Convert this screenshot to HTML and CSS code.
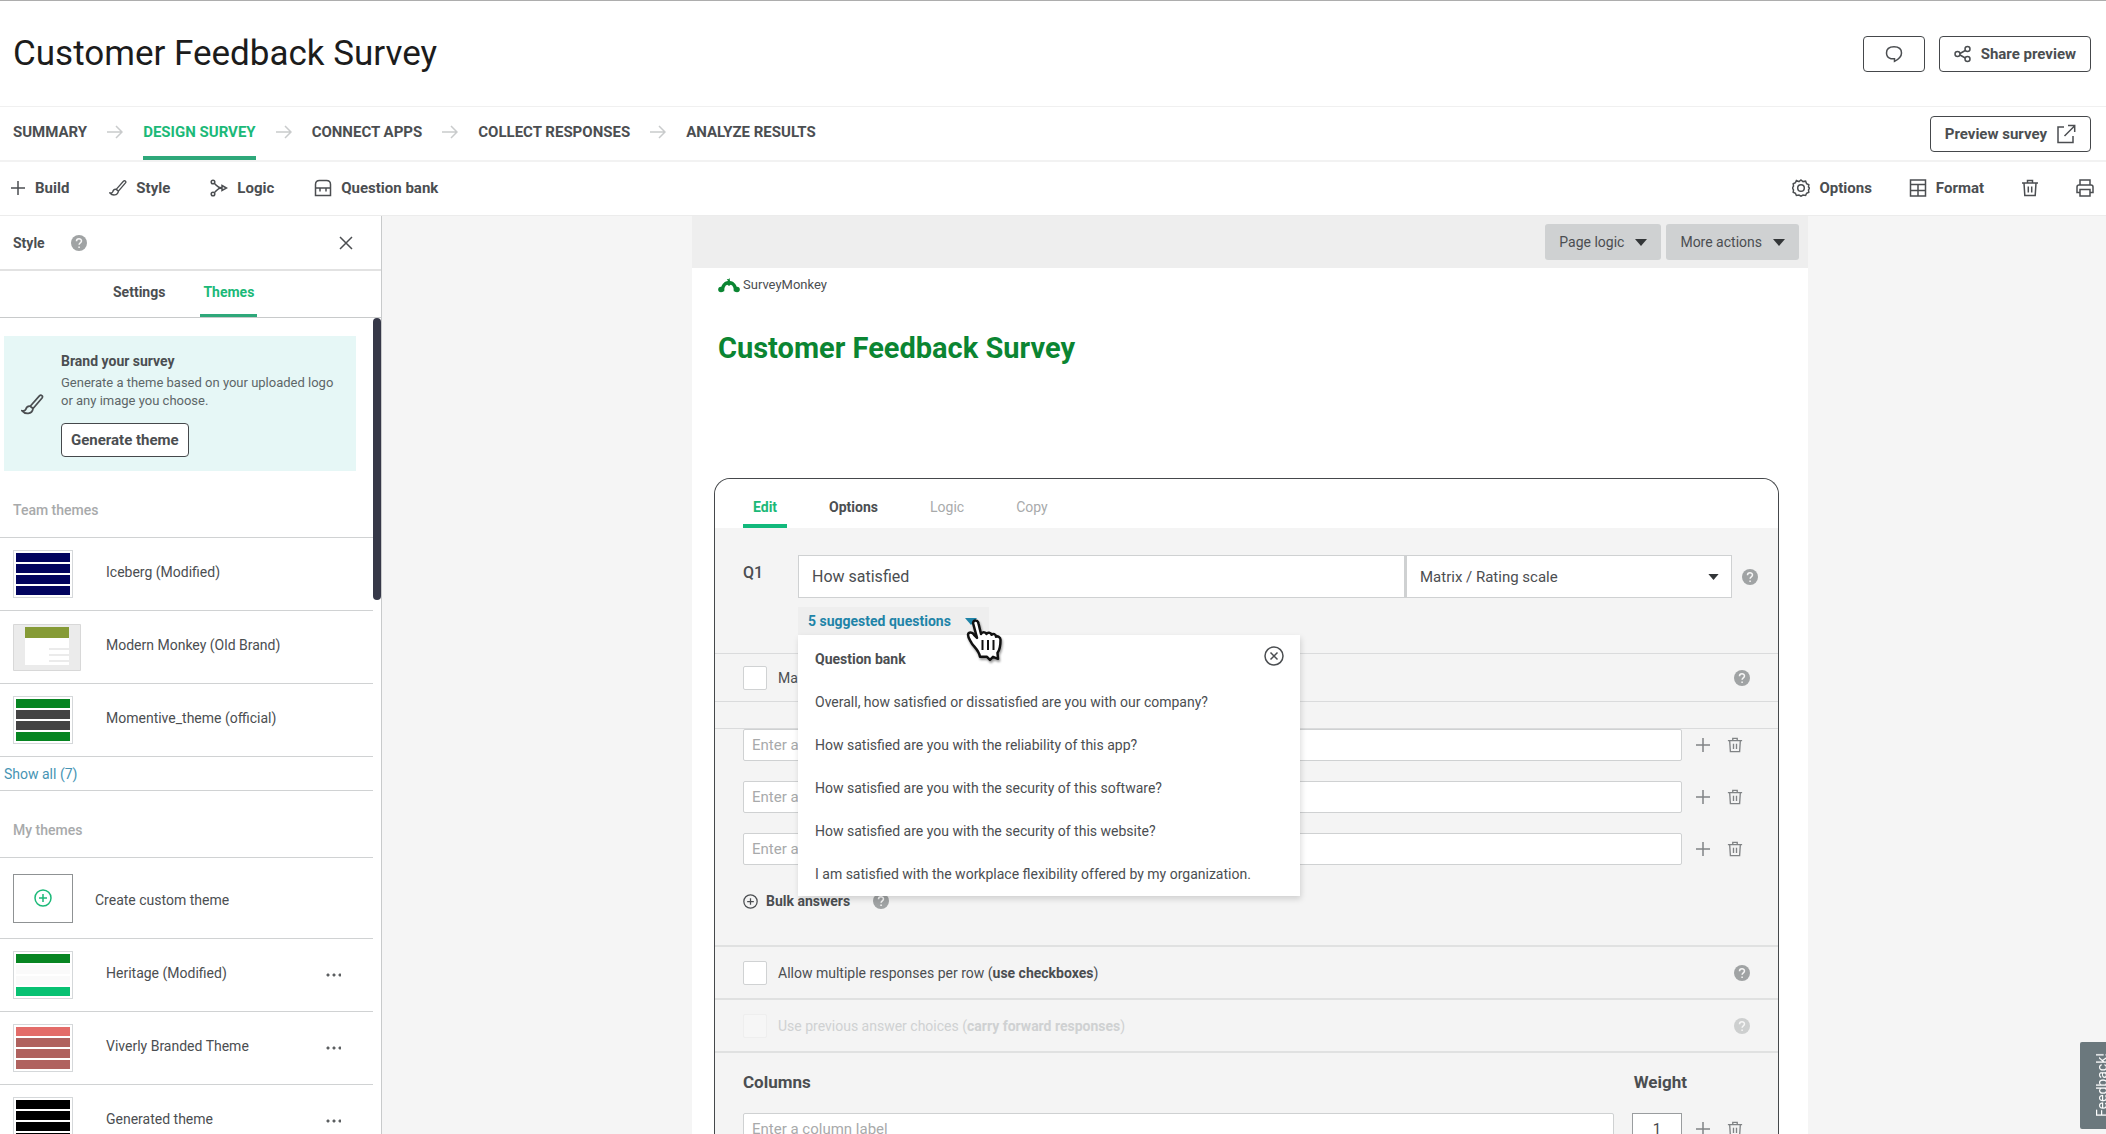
FILE: index.html
```html
<!DOCTYPE html>
<html lang="en">
	<head>
		<meta charset="utf-8">
		<title>Customer Feedback Survey</title>
		<link rel="stylesheet" href="styles.css">
	</head>
	<body>
		<!-- shared icons -->
		<svg class="sprite" width="0" height="0" aria-hidden="true">
			<symbol id="plus" viewBox="0 0 16 16"><path d="M8 1v14M1 8h14"/></symbol>
			<symbol id="arrow" viewBox="0 0 16 16"><path d="M0 8h15M9 2l6 6-6 6"/></symbol>
			<symbol id="brush" viewBox="0 0 20 20"><path d="M8 11.500L16 2.500c1.500-1.500 3.500.2 2.300 1.800L10.500 13.500M8 11.500c-2.500-.5-3.500 1.500-4 3-.4 1-1.500 1.200-3 1 2.500 3 8.500 3.500 9.500-2zM8 11.500l2.500 2"/></symbol>
			<symbol id="trash" viewBox="0 0 18 18"><path d="M1 4h16M6.500 4V1.500h5V4M3 4l.8 12.500h10.400L15 4M7.300 7.500v6M10.700 7.500v6"/></symbol>
			<symbol id="help" viewBox="0 0 16 16"><circle cx="8" cy="8" r="8" stroke="none"/><path fill="none" stroke="#f5f5f5" stroke-width="1.500" d="M5.500 6.300c0-3.300 5-3.200 5-.2 0 1.900-2.400 1.800-2.400 3.700M8.100 11.400v1.700"/></symbol>
			<symbol id="caret" viewBox="0 0 12 7"><path d="M0 0h12L6 7z"/></symbol>
			<symbol id="circle-plus" viewBox="0 0 18 18"><circle cx="9" cy="9" r="8"/><path d="M9 5v8M5 9h8"/></symbol>
		</svg>

		<header class="page-header">
			<h1>Customer Feedback Survey</h1>
			<div class="header-actions">
				<button class="btn btn-comment" type="button" aria-label="Comments">
					<svg class="icon" width="18" height="18" viewBox="0 0 18 18"><path d="M6 13.700C2.800 13 1.500 10.500 1.500 8 1.500 4 4.500 1.700 9 1.700S16.500 4 16.500 8c0 3.700-3 6.300-7 8.300v-2.500z"/></svg>
				</button>
				<button class="btn" type="button">
					<svg class="icon" width="18" height="18" viewBox="0 0 18 18"><circle cx="3.500" cy="9" r="2.500"/><circle cx="13.500" cy="4" r="2.500"/><circle cx="13.500" cy="14" r="2.500"/><path d="M6 8.500l5.300-3M6 10l5.300 3"/></svg>
					Share preview
				</button>
			</div>
		</header>

		<div class="steps-bar">
			<nav class="steps">
				<a href="#">SUMMARY</a>
				<svg class="icon step-arrow" width="16" height="16"><use href="#arrow"/></svg>
				<a href="#" class="active">DESIGN SURVEY</a>
				<svg class="icon step-arrow" width="16" height="16"><use href="#arrow"/></svg>
				<a href="#">CONNECT APPS</a>
				<svg class="icon step-arrow" width="16" height="16"><use href="#arrow"/></svg>
				<a href="#">COLLECT RESPONSES</a>
				<svg class="icon step-arrow" width="16" height="16"><use href="#arrow"/></svg>
				<a href="#">ANALYZE RESULTS</a>
			</nav>
			<button class="btn" type="button">
				Preview survey
				<svg class="icon" width="20" height="20" viewBox="0 0 20 20"><path d="M8 3H2v15.500h15V12M8.500 12L18.500 2M12 1.500h6.700V8"/></svg>
			</button>
		</div>

		<div class="toolbar">
			<div class="tools tools-left">
				<button type="button"><svg class="icon" width="16" height="16"><use href="#plus"/></svg>Build</button>
				<button type="button"><svg class="icon" width="18" height="18"><use href="#brush"/></svg>Style</button>
				<button type="button"><svg class="icon" width="18" height="18" viewBox="0 0 18 18"><path d="M4.500 4.500C7 6.500 7 9 12 9M4.500 13.500C7 11.500 7 9 12 9M12 6.500L16.500 9 12 11.500z"/><circle cx="3" cy="3" r="1.800"/><circle cx="3" cy="15" r="1.800"/></svg>Logic</button>
				<button type="button"><svg class="icon" width="18" height="18" viewBox="0 0 18 18"><path d="M1.500 16.500V5.500c0-3 2-4 4-4h7c2 0 4 1 4 4v11zM1.500 9h15M6 9v3.500M12 9v3.500"/></svg>Question bank</button>
			</div>
			<div class="tools">
				<button type="button"><svg class="icon" width="18" height="18" viewBox="0 0 18 18"><path d="M9 1l2 1.600 2.600-.4 1 2.500 2.200 1-.3 2.300L17.500 9l-1 2 .3 2.300-2.200 1-1 2.200-2.600-.4L9 17.200l-2-1.100-2.600.4-1-2.200-2.200-1L1.500 11 .5 9l1-2-.3-2.300 2.200-1 1-2.200L7 2.600z"/><circle cx="9" cy="9" r="3.300"/></svg>Options</button>
				<button type="button"><svg class="icon" width="18" height="18" viewBox="0 0 18 18"><path d="M1.500 1h15v16h-15zM1.500 5.500h15M1.500 11.500h15M9 5.500V17"/></svg>Format</button>
				<button type="button" aria-label="Delete"><svg class="icon" width="18" height="18"><use href="#trash"/></svg></button>
				<button type="button" aria-label="Print"><svg class="icon" width="18" height="18" viewBox="0 0 18 18"><path d="M4 6V1h10v5M4 13.500H1V8c0-1.300.7-2 2-2h12c1.300 0 2 .7 2 2v5.500h-3M4 10.500h10V17H4z"/></svg></button>
			</div>
		</div>

		<div class="workspace">
			<aside class="sidebar">
				<div class="sidebar-title">
					<h2>Style</h2>
					<svg class="help" width="16" height="16"><use href="#help"/></svg>
					<button class="close" type="button" aria-label="Close"><svg class="icon" width="14" height="14" viewBox="0 0 14 14"><path d="M1 1l12 12M13 1L1 13"/></svg></button>
				</div>
				<nav class="sidebar-tabs">
					<a href="#">Settings</a>
					<a href="#" class="active">Themes</a>
				</nav>
				<div class="sidebar-scroll">
					<div class="sidebar-content">
						<section class="promo">
							<svg class="icon" width="23" height="23"><use href="#brush"/></svg>
							<div>
								<h3>Brand your survey</h3>
								<p>Generate a theme based on your uploaded logo or any image you choose.</p>
								<button class="btn" type="button">Generate theme</button>
							</div>
						</section>
						<h3 class="group-title">Team themes</h3>
						<ul class="themes">
							<li><div class="thumb navy"><i></i><i></i><i></i><i></i></div><span>Iceberg (Modified)</span></li>
							<li>
								<svg class="thumb-page" width="68" height="47" viewBox="0 0 68 47"><path fill="#ebebeb" stroke="#d8d8d8" d="M.5.500h67v46H.5z"/><path fill="#fff" d="M12 14h44v27H12z"/><path fill="#869b36" d="M12 3h44v11H12z"/><path stroke="#ebebeb" stroke-width="2" d="M36 25h20M36 31h20M36 37h20"/></svg>
								<span>Modern Monkey (Old Brand)</span>
							</li>
							<li><div class="thumb momentive"><i></i><i></i><i></i><i></i></div><span>Momentive_theme (official)</span></li>
						</ul>
						<a class="show-all" href="#">Show all (7)</a>
						<h3 class="group-title">My themes</h3>
						<ul class="themes">
							<li class="create"><button class="create-box" type="button" aria-label="Create custom theme"><svg class="icon" width="18" height="18"><use href="#circle-plus"/></svg></button><span>Create custom theme</span></li>
							<li><div class="thumb heritage"><i></i><i></i><i></i><i></i></div><span>Heritage (Modified)</span><button class="more" type="button" aria-label="More"></button></li>
							<li><div class="thumb viverly"><i></i><i></i><i></i><i></i></div><span>Viverly Branded Theme</span><button class="more" type="button" aria-label="More"></button></li>
							<li><div class="thumb black"><i></i><i></i><i></i><i></i></div><span>Generated theme</span><button class="more" type="button" aria-label="More"></button></li>
						</ul>
					</div>
					<div class="scroll-thumb"></div>
				</div>
			</aside>

			<main class="main">
				<div class="survey">
					<div class="page-actions">
						<button type="button">Page logic <svg class="caret" width="12" height="7"><use href="#caret"/></svg></button>
						<button type="button">More actions <svg class="caret" width="12" height="7"><use href="#caret"/></svg></button>
					</div>
					<div class="survey-head">
						<div class="logo">
							<svg width="22" height="15" viewBox="0 0 22 15"><path fill="none" stroke="#0b8532" stroke-width="3.500" d="M4.500 13.500C3.500 1.500 18.500 1.500 17.500 13.500"/><path fill="#0b8532" d="M10 3L8.800 1l1.700.3L11.500 0 12 3zM11 8L6 4h10z"/><circle cx="3" cy="11.500" r="2.800" fill="#0b8532"/><circle cx="19" cy="11.500" r="2.800" fill="#0b8532"/></svg>
							<span>SurveyMonkey</span>
						</div>
						<h2>Customer Feedback Survey</h2>
					</div>

					<div class="card">
						<nav class="card-tabs">
							<a href="#" class="active">Edit</a>
							<a href="#">Options</a>
							<a href="#" class="disabled">Logic</a>
							<a href="#" class="disabled">Copy</a>
						</nav>

						<div class="question">
							<label class="q-number" for="question">Q1</label>
							<div class="q-fields">
								<div class="q-inputs">
									<input id="question" type="text" value="How satisfied">
									<div class="select-box">
										<select aria-label="Question type"><option>Matrix / Rating scale</option></select>
										<svg class="caret" width="11" height="6"><use href="#caret"/></svg>
									</div>
									<svg class="help" width="16" height="16"><use href="#help"/></svg>
								</div>
								<div class="suggest">
									<button class="suggest-toggle" type="button">5 suggested questions <svg class="caret" width="12" height="7"><use href="#caret"/></svg></button>
									<div class="popover">
										<div class="popover-head">
											<h3>Question bank</h3>
											<button type="button" aria-label="Close"><svg class="icon" width="20" height="20" viewBox="0 0 20 20"><circle cx="10" cy="10" r="9"/><path d="M6.500 6.500l7 7M13.500 6.500l-7 7"/></svg></button>
										</div>
										<ul>
											<li>Overall, how satisfied or dissatisfied are you with our company?</li>
											<li>How satisfied are you with the reliability of this app?</li>
											<li>How satisfied are you with the security of this software?</li>
											<li>How satisfied are you with the security of this website?</li>
											<li>I am satisfied with the workplace flexibility offered by my organization.</li>
										</ul>
									</div>
									<svg class="cursor" width="40" height="44" viewBox="0 0 40 44"><path fill="#fff" stroke="#111" stroke-width="2.500" stroke-linejoin="round" d="M9 5c1-3.500 5-3 5.500.5L17 16c1-2.500 4.500-2.500 5.500 0 1-2 4.500-1.500 5 .8 1.500-1.500 4.500-.8 4.500 2 1.500-1 4.500 0 4.500 3 0 6-.5 10-3 13l.5 6-5-2-3 3-3-3h-7c-1-6-5-9-8-13-2-4-4-6-4-9 .5-3 4.500-3 6 0l3 3z"/><path stroke="#111" stroke-width="2" d="M18.500 22v10M24 22v10M29.500 22v10"/></svg>
								</div>
							</div>
						</div>

						<div class="option-row">
							<input id="mandatory" type="checkbox"><label for="mandatory">Make this question</label>
							<svg class="help" width="16" height="16"><use href="#help"/></svg>
						</div>
						<div class="rows-cut"></div>
						<div class="rows">
							<div class="row-item">
								<input type="text" placeholder="Enter a row label" aria-label="Row 1">
								<button type="button" aria-label="Add"><svg class="icon" width="16" height="16"><use href="#plus"/></svg></button>
								<button type="button" aria-label="Delete"><svg class="icon" width="16" height="16"><use href="#trash"/></svg></button>
							</div>
							<div class="row-item">
								<input type="text" placeholder="Enter a row label" aria-label="Row 2">
								<button type="button" aria-label="Add"><svg class="icon" width="16" height="16"><use href="#plus"/></svg></button>
								<button type="button" aria-label="Delete"><svg class="icon" width="16" height="16"><use href="#trash"/></svg></button>
							</div>
							<div class="row-item">
								<input type="text" placeholder="Enter a row label" aria-label="Row 3">
								<button type="button" aria-label="Add"><svg class="icon" width="16" height="16"><use href="#plus"/></svg></button>
								<button type="button" aria-label="Delete"><svg class="icon" width="16" height="16"><use href="#trash"/></svg></button>
							</div>
							<div class="bulk">
								<button type="button"><svg class="icon" width="15" height="15"><use href="#circle-plus"/></svg>Bulk answers</button>
								<svg class="help" width="16" height="16"><use href="#help"/></svg>
							</div>
						</div>

						<div class="option-row tall">
							<input id="multiple" type="checkbox"><label for="multiple">Allow multiple responses per row (<b>use checkboxes</b>)</label>
							<svg class="help" width="16" height="16"><use href="#help"/></svg>
						</div>
						<div class="option-row tall disabled">
							<input id="carry" type="checkbox" disabled><label for="carry">Use previous answer choices (<b>carry forward responses</b>)</label>
							<svg class="help" width="16" height="16"><use href="#help"/></svg>
						</div>
						<div class="columns">
							<div class="columns-head"><h3>Columns</h3><h3>Weight</h3></div>
							<div class="row-item">
								<input type="text" placeholder="Enter a column label" aria-label="Column 1">
								<input class="weight" type="text" value="1" aria-label="Weight 1">
								<button type="button" aria-label="Add"><svg class="icon" width="16" height="16"><use href="#plus"/></svg></button>
								<button type="button" aria-label="Delete"><svg class="icon" width="16" height="16"><use href="#trash"/></svg></button>
							</div>
						</div>
					</div>
				</div>
			</main>
		</div>

		<button class="feedback" type="button">Feedback!</button>
	</body>
</html>
```
FILE: styles.css
```css
* {
	margin: 0;
	padding: 0;
	box-sizing: border-box;
}
body {
	display: flex;
	flex-direction: column;
	height: 100vh;
	overflow: hidden;
	border-top: 1px solid #adadad;
	background-color: #fff;
	color: #4b4e51;
	font-family: Roboto, "Liberation Sans", sans-serif;
	font-size: 14px;
	line-height: 18px;
}
button, input, select {
	font: inherit;
	color: inherit;
}
button {
	background: none;
	border: 0;
	white-space: nowrap;
}
a {
	color: inherit;
	text-decoration: none;
}
ul {
	list-style: none;
}
h2, h3 {
	font-size: 14px;
	font-weight: 500;
}
.sprite {
	position: absolute;
}
svg {
	display: block;
	flex: none;
}
.icon {
	fill: none;
	stroke: currentColor;
	stroke-width: 1.5;
}
.help {
	fill: #a0a3a4;
}
.caret {
	fill: #333638;
}
.btn {
	display: flex;
	align-items: center;
	justify-content: center;
	gap: 9px;
	height: 36px;
	padding: 0 14px;
	border: 1px solid #45484b;
	border-radius: 4px;
	background-color: #fff;
	font-size: 15px;
	font-weight: 700;
}

/* header */
.page-header {
	display: flex;
	align-items: center;
	justify-content: space-between;
	height: 106px;
	padding: 0 15px 0 13px;
	border-bottom: 1px solid #f0f0f0;
	flex: none;
}
.page-header h1 {
	font-size: 35px;
	font-weight: 400;
	line-height: 40px;
	color: #1c1c1c;
}
.header-actions {
	display: flex;
	gap: 14px;
}
.btn-comment {
	width: 62px;
}
.steps-bar {
	display: flex;
	align-items: center;
	justify-content: space-between;
	height: 55px;
	padding: 0 15px 0 13px;
	border-bottom: 2px solid #f2f2f2;
	flex: none;
}
.steps {
	display: flex;
	align-items: center;
	gap: 20px;
	height: 100%;
	font-size: 15px;
	font-weight: 700;
}
.steps a {
	display: flex;
	align-items: center;
	height: 100%;
	border-bottom: 4px solid transparent;
}
.steps a.active {
	color: #1bb978;
	border-color: #2ea87a;
}
.step-arrow {
	margin-bottom: 4px;
	color: #c9cbcc;
}
.toolbar {
	display: flex;
	align-items: center;
	justify-content: space-between;
	height: 54px;
	padding: 0 12px 2px 10px;
	border-bottom: 1px solid #ececec;
	flex: none;
}
.tools {
	display: flex;
	gap: 37px;
}
.tools-left {
	gap: 40px;
}
.tools button {
	display: flex;
	align-items: center;
	gap: 9px;
	font-size: 15px;
	font-weight: 700;
}

/* sidebar */
.workspace {
	display: flex;
	flex: 1;
	min-height: 0;
}
.sidebar {
	display: flex;
	flex-direction: column;
	width: 382px;
	border-right: 1px solid #c8cacb;
	flex: none;
}
.sidebar-title {
	display: flex;
	align-items: center;
	height: 55px;
	padding: 0 28px 0 13px;
	border-bottom: 2px solid #e2e2e2;
	flex: none;
}
.sidebar-title h2 {
	font-weight: 700;
}
.sidebar-title .help {
	margin-left: 26px;
}
.close {
	margin-left: auto;
}
.sidebar-tabs {
	display: flex;
	gap: 32px;
	height: 47px;
	padding-left: 110px;
	border-bottom: 1px solid #c8cacb;
	font-weight: 700;
	flex: none;
}
.sidebar-tabs a {
	padding: 12px 3px 0;
}
.sidebar-tabs .active {
	color: #1bb978;
	border-bottom: 3px solid #2ea87a;
}
.sidebar-scroll {
	display: flex;
	flex: 1;
	min-height: 0;
	overflow: hidden;
}
.sidebar-content {
	flex: 1;
}
.scroll-thumb {
	width: 8px;
	height: 34.5%;
	border-radius: 4px;
	background-color: #363848;
}
.promo {
	display: flex;
	align-items: center;
	gap: 17px;
	margin: 18px 17px 0 4px;
	padding: 16px 12px 14px 17px;
	background-color: #e6f7f6;
}
.promo h3 {
	font-weight: 700;
}
.promo p {
	margin: 4px 0 13px;
	font-size: 13px;
	color: #5d6668;
}
.promo .btn {
	height: 34px;
	padding: 0 9px;
}
.group-title {
	padding: 30px 13px 18px;
	color: #a8aaab;
}
.themes li {
	display: flex;
	align-items: center;
	height: 73px;
	padding: 0 32px 0 13px;
	border-top: 1px solid #d0d2d3;
}
.themes span {
	padding-bottom: 4px;
}
.thumb {
	display: flex;
	flex-direction: column;
	gap: 2px;
	width: 60px;
	height: 48px;
	margin-right: 33px;
	padding: 2px;
	border: 1px solid #d5d8da;
}
.thumb i {
	flex: 1;
}
.thumb-page {
	margin-right: 25px;
}
.navy i {
	background-color: #02045f;
}
.momentive i {
	background-color: #434343;
}
.momentive i:first-child, .momentive i:last-child, .heritage i:first-child {
	background-color: #078522;
}
.heritage i {
	background-color: #fafafa;
}
.heritage i:last-child {
	background-color: #07c172;
}
.viverly i {
	background-color: #b0625f;
}
.viverly i:first-child {
	background-color: #e36c69;
}
.black i {
	background-color: #000;
}
.show-all {
	display: block;
	padding: 8px 4px 7px;
	border-top: 1px solid #d0d2d3;
	border-bottom: 1px solid #d0d2d3;
	color: #4694b4;
}
.themes .create {
	height: 81px;
}
.themes .create span {
	padding: 4px 0 0;
}
.create-box {
	display: flex;
	align-items: center;
	justify-content: center;
	width: 60px;
	height: 49px;
	margin-right: 22px;
	border: 1px solid #8f9294;
	color: #1bb978;
}
.more {
	width: 16px;
	height: 4px;
	margin-left: auto;
	background: radial-gradient(circle, #5c5f61 1px, transparent 2px) 0 0 / 6px 4px;
}

/* survey page */
.main {
	flex: 1;
	padding-left: 12px;
	background-color: #f5f5f5;
}
.survey {
	display: flex;
	flex-direction: column;
	max-width: 1116px;
	height: 100%;
	margin: 0 auto;
	background-color: #fff;
}
.page-actions {
	display: flex;
	justify-content: flex-end;
	gap: 5px;
	padding: 8px 9px;
	background-color: #eee;
}
.page-actions button {
	display: flex;
	align-items: center;
	gap: 11px;
	height: 36px;
	padding: 0 14px;
	border-radius: 3px;
	background-color: #cfd1d2;
}
.survey-head {
	padding: 8px 26px 112px;
}
.logo {
	display: flex;
	align-items: center;
	gap: 3px;
	height: 18px;
	font-size: 13px;
}
.survey-head h2 {
	margin-top: 36px;
	font-size: 29px;
	font-weight: 700;
	line-height: 36px;
	color: #0b8532;
}
.card {
	flex: 1;
	margin: 0 29px 0 22px;
	border: 1px solid #45484b;
	border-bottom: 0;
	border-radius: 16px 16px 0 0;
	background-color: #f4f4f4;
}
.card-tabs {
	display: flex;
	gap: 32px;
	height: 49px;
	padding-left: 28px;
	border-radius: 16px 16px 0 0;
	background-color: #fff;
	font-weight: 700;
}
.card-tabs a {
	padding: 19px 10px 0;
}
.card-tabs .active {
	color: #1bb978;
	border-bottom: 4px solid #12b97c;
}
.card-tabs .disabled {
	color: #a8aaab;
	font-weight: 400;
}
.question {
	display: flex;
	padding: 27px 20px 18px 28px;
}
.q-number {
	width: 55px;
	padding-top: 9px;
	font-size: 16px;
	font-weight: 500;
}
.q-fields {
	flex: 1;
}
.q-inputs {
	display: flex;
	align-items: center;
	font-size: 16px;
}
.q-inputs input, .q-inputs select {
	height: 43px;
	padding: 0 13px;
	border: 1px solid #cfd1d2;
	background-color: #fff;
}
.q-inputs input {
	flex: 1;
}
.select-box {
	position: relative;
	width: 327px;
	margin-right: 10px;
}
.select-box select {
	display: block;
	width: 100%;
	border-left-width: 2px;
	font-size: 15px;
	appearance: none;
}
.select-box .caret {
	position: absolute;
	top: 19px;
	right: 13px;
}
.suggest {
	position: relative;
	width: 502px;
	margin-top: 9px;
}
.suggest-toggle {
	display: flex;
	align-items: center;
	gap: 14px;
	height: 28px;
	padding: 0 12px 0 10px;
	background-color: #eee;
	color: #1f84a8;
	font-weight: 700;
}
.suggest-toggle .caret {
	fill: #1f84a8;
}
.popover {
	position: absolute;
	top: 28px;
	left: 0;
	width: 100%;
	padding: 11px 16px 0 17px;
	background-color: #fff;
	box-shadow: 1px 3px 6px rgba(0, 0, 0, .15);
}
.popover-head {
	display: flex;
	justify-content: space-between;
	height: 35px;
}
.popover-head h3 {
	padding-top: 4px;
	font-weight: 700;
}
.popover-head button {
	height: 20px;
}
.popover li {
	height: 43px;
	padding-top: 12px;
	white-space: nowrap;
}
.cursor {
	position: absolute;
	top: 11px;
	left: 166px;
	filter: drop-shadow(1px 2px 1px rgba(0, 0, 0, .4));
}
.option-row {
	display: flex;
	align-items: center;
	height: 48px;
	padding: 0 28px;
	border-top: 1px solid #dadbdc;
}
.option-row.tall {
	height: 53px;
	border-top: 2px solid #e0e1e1;
}
.option-row input {
	appearance: none;
	width: 24px;
	height: 24px;
	margin-right: 11px;
	border: 1px solid #d0d2d3;
	border-radius: 2px;
	background-color: #fff;
}
.option-row b {
	font-weight: 700;
}
.option-row .help {
	margin-left: auto;
}
.option-row.disabled {
	color: #cfd1d2;
}
.option-row.disabled input {
	border-color: #eee;
	background-color: #f6f6f6;
}
.option-row.disabled .help {
	fill: #cdcfcf;
}
.rows-cut {
	height: 27px;
	border-top: 1px solid #dadbdc;
}
.rows {
	display: flex;
	flex-direction: column;
	gap: 20px;
	height: 217px;
	border-top: 1px solid #dadbdc;
}
.row-item {
	display: flex;
	align-items: center;
	padding: 0 35px 0 28px;
	color: #808385;
}
.row-item input {
	flex: 1;
	height: 32px;
	padding: 0 8px;
	border: 1px solid #cfd1d2;
	border-radius: 2px;
	background-color: #fff;
	font-size: 15px;
}
.row-item input::placeholder {
	color: #a8aaab;
}
.row-item button {
	margin-left: 13px;
}
.row-item button + button {
	margin-left: 16px;
}
.bulk {
	display: flex;
	align-items: center;
	gap: 23px;
	padding: 7px 28px 0;
}
.bulk button {
	display: flex;
	align-items: center;
	gap: 8px;
	font-weight: 700;
}
.columns {
	border-top: 2px solid #e0e1e1;
}
.columns-head {
	display: flex;
	justify-content: space-between;
	padding: 19px 91px 21px 28px;
}
.columns-head h3 {
	font-size: 17px;
	font-weight: 700;
	line-height: 20px;
}
.row-item .weight {
	flex: none;
	width: 50px;
	margin-left: 18px;
	border-color: #9a9d9f;
	border-radius: 0;
	text-align: center;
	color: #45484b;
}

/* sticks to the window edge */
.feedback {
	position: fixed;
	right: 0;
	bottom: 5px;
	width: 26px;
	height: 87px;
	padding-right: 13px;
	border-radius: 0 2px 2px 0;
	background-color: #6b787d;
	color: #fff;
	text-align: center;
	writing-mode: vertical-rl;
	transform: rotate(180deg);
}
```
